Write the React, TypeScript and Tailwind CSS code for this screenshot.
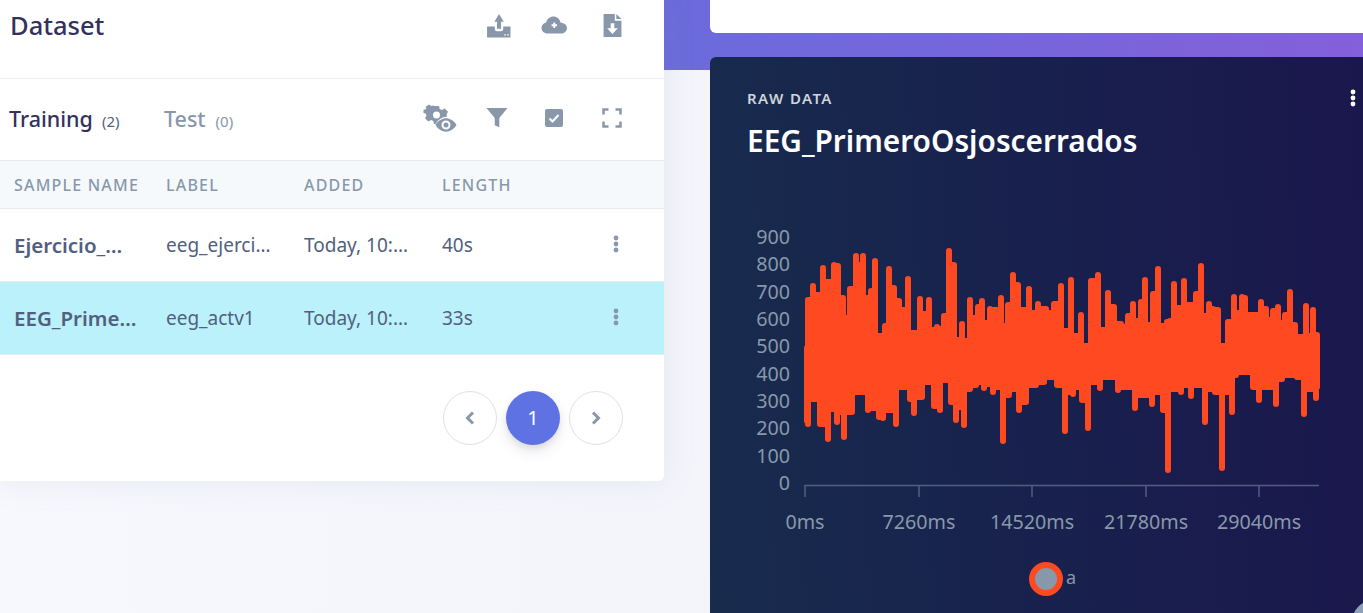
import React from "react";

const tops: [number, number][] = [
  [807,345],[808,297],[813,283],[818,292],[823,265],[829,279],[834,262],[838,263],[843,295],[846,315],[850,286],[856,253],[860,262],[863,253],[868,295],[871,288],[875,258],[880,333],[885,323],[889,266],[894,285],[899,298],[903,307],[908,276],[913,330],[920,296],[924,311],[929,297],[933,327],[937,324],[941,326],[944,313],[949,248],[954,262],[957,337],[962,321],[966,338],[970,297],[974,315],[978,304],[982,298],[987,320],[990,306],[995,307],[1001,295],[1005,323],[1008,302],[1013,272],[1018,282],[1023,307],[1029,286],[1034,310],[1038,301],[1046,306],[1050,310],[1054,301],[1061,283],[1066,328],[1071,277],[1076,333],[1081,312],[1086,343],[1091,278],[1098,272],[1103,327],[1108,290],[1114,304],[1121,321],[1124,324],[1128,313],[1133,301],[1137,318],[1141,299],[1145,277],[1149,322],[1153,291],[1158,266],[1162,323],[1167,319],[1170,318],[1174,281],[1178,305],[1184,278],[1190,302],[1196,291],[1201,263],[1206,313],[1209,301],[1213,306],[1218,307],[1223,343],[1228,319],[1234,294],[1238,310],[1242,294],[1245,295],[1249,312],[1256,312],[1261,299],[1266,306],[1270,317],[1273,308],[1278,304],[1283,320],[1285,312],[1290,289],[1295,322],[1299,334],[1306,303],[1311,333],[1313,307],[1317,332],
];
const bottoms: [number, number][] = [
  [807,424],[808,427],[813,402],[820,427],[828,442],[833,412],[837,425],[841,415],[844,440],[852,415],[861,395],[868,413],[873,411],[879,420],[883,421],[890,413],[896,427],[902,390],[910,402],[914,416],[922,400],[928,385],[934,409],[940,413],[946,383],[951,405],[956,423],[960,410],[964,428],[970,392],[976,388],[980,385],[984,391],[989,387],[993,395],[997,390],[1003,444],[1009,398],[1014,392],[1019,413],[1026,405],[1030,388],[1036,388],[1044,385],[1050,380],[1057,388],[1065,434],[1069,395],[1073,397],[1078,390],[1082,403],[1088,431],[1094,385],[1100,391],[1106,380],[1118,393],[1127,390],[1135,411],[1142,398],[1152,407],[1157,395],[1163,413],[1168,473],[1174,392],[1181,395],[1186,388],[1191,399],[1197,388],[1205,425],[1210,392],[1215,395],[1222,471],[1227,395],[1232,415],[1236,378],[1240,375],[1248,375],[1253,390],[1259,403],[1266,390],[1276,407],[1282,382],[1292,378],[1297,380],[1304,417],[1310,392],[1316,401],[1317,390],
];

function step(points: [number, number][], sign: number) {
  // Sign -1: upper outline (smaller y is the peak); sign 1: lower outline.
  const out: string[] = [];
  for (let i = 0; i < points.length; i++) {
    const [x, y] = points[i];
    const inset = y - sign * 3;
    out.push(`${x},${inset}`);
    const next = points[i + 1];
    if (!next) break;
    const nextInset = next[1] - sign * 3;
    const towardsEdge = sign < 0 ? next[1] < y : next[1] > y;
    out.push(towardsEdge ? `${next[0]},${inset}` : `${x},${nextInset}`);
  }
  return out;
}

const wavePoints = [...step(tops, -1), ...step(bottoms, 1).reverse()].join(" ");

const yLabels = ["900", "800", "700", "600", "500", "400", "300", "200", "100", "0"];
const xLabels: [string, number][] = [
  ["0ms", 805],
  ["7260ms", 919],
  ["14520ms", 1032],
  ["21780ms", 1146],
  ["29040ms", 1259],
];

function Chart() {
  // Chart coordinates are the page's own x and y, shifted by the viewBox.
  return (
    <svg viewBox="710 200 653 340" className="block h-[340px] w-[653px]">
      {yLabels.map((l, i) => (
        <text key={l} x={790} y={244 + i * 27.35} textAnchor="end" fontSize={19.7} fill="#8898aa">
          {l}
        </text>
      ))}
      <polygon points={wavePoints} fill="#ff4a21" stroke="#ff4a21" strokeWidth={6} strokeLinejoin="round" />
      <path d="M805 497V485.500H1319" fill="none" stroke="#525f7f" strokeWidth={1.5} />
      {xLabels.slice(1).map(([l, x]) => (
        <path key={l} d={`M${x} 485.500V497`} stroke="#525f7f" strokeWidth={1.5} />
      ))}
      {xLabels.map(([l, x]) => (
        <text key={l} x={x} y={529} textAnchor="middle" fontSize={19.7} fill="#8898aa">
          {l}
        </text>
      ))}
    </svg>
  );
}

function Icon({ d, box = "0 0 24 24", className }: { d: string; box?: string; className: string }) {
  return (
    <svg viewBox={box} className={className} fill="#8898aa">
      <path d={d} fillRule="evenodd" />
    </svg>
  );
}

function Dots({ color = "#8898aa" }: { color?: string }) {
  return (
    <svg width="6" height="18" viewBox="0 0 6 18" fill={color}>
      <circle cx="3" cy="3" r="2.4" />
      <circle cx="3" cy="9" r="2.4" />
      <circle cx="3" cy="15" r="2.4" />
    </svg>
  );
}

function Row({ name, label, added, length, active }: { name: string; label: string; added: string; length: string; active?: boolean }) {
  return (
    <div className={`grid h-[73px] grid-cols-[152px_138px_138px_1fr_24px] items-center border-b border-[#e9ecef] pl-[14px] pr-[36px] pt-[1px] text-[19px] text-[#525f7f] ${active ? "bg-[#bbf1fb]" : "bg-white"}`}>
      <span className="block w-[125px] truncate text-[20.500px] font-semibold">{name}</span>
      <span className="block w-[108px] truncate">{label}</span>
      <span className="block w-[110px] truncate">{added}</span>
      <span>{length}</span>
      <span className="mt-[-3px] flex justify-center"><Dots /></span>
    </div>
  );
}

export default function App() {
  return (
    <div
      className="relative flex h-[613px] w-[1363px] overflow-hidden bg-[linear-gradient(90deg,#f7f8fd,#f1f2f9)]"
      style={{ fontFamily: '"Noto Sans", sans-serif' }}
    >
      <div className="absolute left-[664px] right-0 top-0 h-[70px] bg-[linear-gradient(87deg,#6b6bdc,#8460da)]" />

      <section className="relative h-[481px] w-[664px] shrink-0 rounded-br-[6px] bg-white shadow-[0_0_32px_rgba(136,152,170,0.14)]">
        <header className="flex h-[79px] items-start justify-between border-b border-[#eef0f3] pl-[10px] pr-[41px]">
          <h1 className="mt-[7px] text-[25.500px] font-medium leading-[36px] text-[#32325d]">Dataset</h1>
          <div className="mt-[12px] flex items-center">
            <Icon className="h-[25px] w-[25px]" d="M8 8.5 12.500 1 17 8.500H14.500V15H10.500V8.500ZM1 13H8.500V15.500Q8.500 17.500 10.500 17.500H14.500Q16.500 17.500 16.500 15.500V13H23.500V23.500H1ZM17.500 20.500V21.500H19V20.500ZM20.300 20.500V21.500H21.800V20.500Z" />
            <Icon className="ml-[30px] h-[27px] w-[27px]" d="M7 21.500C3 21.500 .5 19 .5 16 .5 13 2.500 11 5 10.700 6 7 9 4.500 12.500 4.500 16 4.500 18.800 7 19.500 10.500 22 10.800 26 12.500 26 16 26 19.500 23 21.500 20 21.500ZM12.300 10.500V12.300H10.500V14.200H12.300V16H14.200V14.200H16V12.300H14.200V10.500Z" box="0 0 27 27" />
            <Icon className="ml-[34px] h-[25px] w-[21px]" d="M1 1H12V7.500H18.500V23.500H1ZM13.500 1 18.500 6H13.500ZM8 10V15H4.500L9.700 20.500 15 15H11.500V10Z" box="0 0 19.500 24.500" />
          </div>
        </header>

        <div className="flex h-[81px] items-center pl-[9px] pr-[42px]">
          <div className="flex w-[155px] items-baseline gap-[9px] text-[#32325d]">
            <span className="text-[21.500px] font-medium">Training</span>
            <span className="text-[15px] text-[#525f7f]">(2)</span>
          </div>
          <div className="flex items-baseline gap-[10px]">
            <span className="text-[21.500px] font-medium text-[#8898aa]">Test</span>
            <span className="text-[15px] text-[#8898aa]">(0)</span>
          </div>
          <div className="ml-auto mt-[-4px] flex items-center">
            <svg width="34" height="30" viewBox="0 0 34 30" fill="#8898aa">
              <path fillRule="evenodd" d="M10 2H15L15.700 5 18 6 20.700 4.500 24 7.800 22.500 10.500 23.200 12.500C18 13 14 15.500 11.500 20H10L9.300 17 7 16 4.300 17.500 1 14.200 2.500 11.500 1.600 9.500-.5 9V5.800L2.500 5 1.500 3 4.800 .5 7.500 2 9 1.500ZM12.500 7.500A3.500 3.500 0 1 0 12.500 14.500 3.500 3.500 0 1 0 12.500 7.500Z" transform="translate(1 1)" />
              <path fillRule="evenodd" d="M12.500 22C15 17.500 19.500 15.300 23 15.300S31 17.500 33.500 22C31 26.500 26.500 28.700 23 28.700S15 26.500 12.500 22ZM23 17.500A4.500 4.500 0 1 0 23 26.500 4.500 4.500 0 1 0 23 17.500ZM23 19.500A2.500 2.500 0 1 1 23 24.500 2.500 2.500 0 1 1 23 19.500Z" />
            </svg>
            <Icon className="ml-[28px] h-[22px] w-[24px]" d="M.5 1H23.500L14.500 12V22L9.500 20V12Z" />
            <svg width="20" height="20" viewBox="0 0 20 20" className="ml-[35px]">
              <rect x="1" y="1" width="18" height="18" rx="2" fill="#8898aa" />
              <path d="M5.500 10.500 8.500 13.500 14.500 7" fill="none" stroke="#fff" strokeWidth="2.200" />
            </svg>
            <svg width="20" height="20" viewBox="0 0 20 20" fill="none" stroke="#8898aa" strokeWidth="2.500" className="ml-[38px]">
              <path d="M1.500 6.500V1.500H6.500M13.500 1.500H18.500V6.500M18.500 13.500V18.500H13.500M6.500 18.500H1.500V13.500" />
            </svg>
          </div>
        </div>

        <div className="grid h-[49px] grid-cols-[152px_138px_138px_1fr] items-center border-y border-[#e9ecef] bg-[#f6f9fc] pl-[14px] text-[16px] font-medium uppercase tracking-[1.200px] text-[#8898aa]">
          <span className="whitespace-nowrap">Sample name</span>
          <span>Label</span>
          <span>Added</span>
          <span>Length</span>
        </div>
        <Row name="Ejercicio_Movimiento" label="eeg_ejercicio" added="Today, 10:45:12" length="40s" />
        <Row name="EEG_PrimeroOsjoscerrados" label="eeg_actv1" added="Today, 10:45:12" length="33s" active />

        <nav className="mr-[41px] mt-[36px] flex justify-end gap-[9px]">
          <button className="flex h-[54px] w-[54px] items-center justify-center rounded-full border border-[#dee2e6] bg-white">
            <svg width="10" height="14" viewBox="0 0 10 14" fill="none" stroke="#8898aa" strokeWidth="3"><path d="M8 1.500 2.500 7 8 12.500" /></svg>
          </button>
          <button className="flex h-[54px] w-[54px] items-center justify-center rounded-full bg-[#5e72e4] text-[20px] text-white shadow-[0_7px_14px_rgba(50,50,93,0.1),0_3px_6px_rgba(0,0,0,0.08)]">1</button>
          <button className="flex h-[54px] w-[54px] items-center justify-center rounded-full border border-[#dee2e6] bg-white">
            <svg width="10" height="14" viewBox="0 0 10 14" fill="none" stroke="#8898aa" strokeWidth="3"><path d="M2 1.500 7.500 7 2 12.500" /></svg>
          </button>
        </nav>
      </section>

      <div className="relative ml-[46px] flex w-[653px] shrink-0 flex-col gap-[24px]">
        <div className="h-[33px] rounded-bl-[6px] bg-white" />
        <section className="relative h-[556px] rounded-tl-[6px] bg-[linear-gradient(87deg,#172b4d,#1a174d)]">
          <div className="flex items-start justify-between pl-[37px] pr-[7px] pt-[32px]">
            <div>
              <h6 className="text-[15px] font-semibold uppercase leading-[18px] tracking-[1.400px] text-[#ced4da]">Raw data</h6>
              <h2 className="mt-[13px] text-[29.800px] font-semibold leading-[42px] text-white">EEG_PrimeroOsjoscerrados</h2>
            </div>
            <Dots color="#ffffff" />
          </div>
          <div className="mt-[38px]">
            <Chart />
          </div>
          <div className="ml-[319px] mt-[22px] flex items-center gap-[3px]">
            <span className="h-[34px] w-[34px] rounded-full border-[6px] border-[#ff4a21] bg-[#8898aa]" />
            <span className="mt-[-3px] text-[18px] text-[#8898aa]">a</span>
          </div>
        </section>
      </div>

      <div className="absolute left-[1352px] top-[600px] h-[44px] w-[44px] rounded-full bg-[#8ea0b8]" />
    </div>
  );
}
